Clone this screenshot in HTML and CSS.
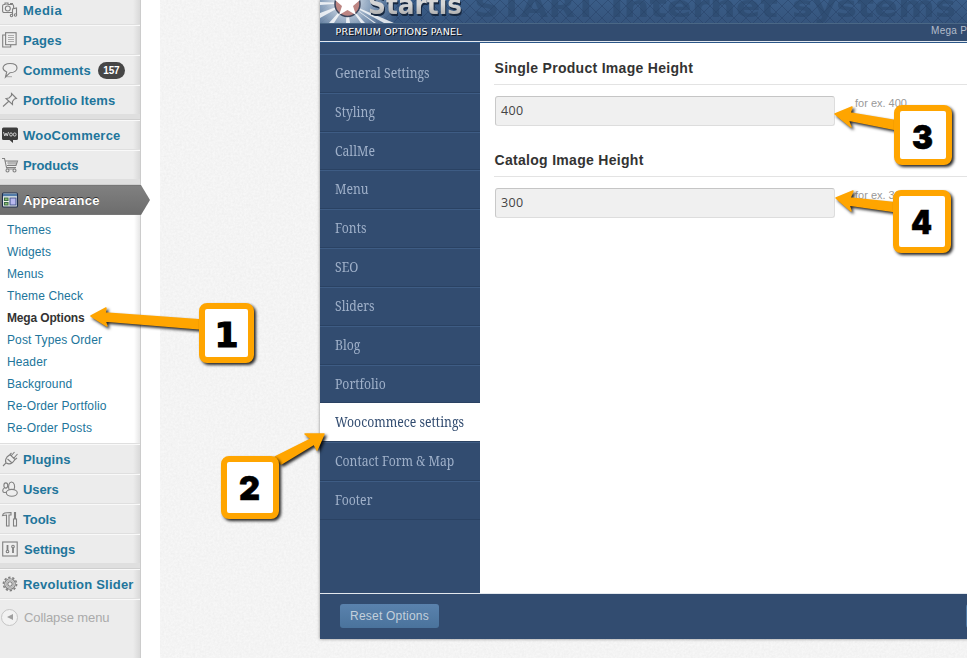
FILE: index.html
```html
<!DOCTYPE html>
<html lang="en">
<head>
<meta charset="utf-8">
<title>Mega Options</title>
<link rel="stylesheet" href="styles.css">
</head>
<body>
<div class="screen">
  <nav class="sidebar">
    <a class="item"><svg class="ico" viewBox="0 0 16 16"><rect x=".6" y="2.5" width="11" height="8" rx="1.5"/><path d="M3 2.5V1h3v1.500M8 1.500h3"/><circle cx="5.800" cy="6.500" r="2.500"/><path d="M10.500 13.500V7l4-1v7"/><circle cx="9.500" cy="13.500" r="1.200"/><circle cx="13.500" cy="13" r="1.200"/></svg><span class="wider">Media</span></a>
    <a class="item"><svg class="ico" viewBox="0 0 16 16"><path d="M3.500 3H.700v12h8v-2"/><rect x="3.600" y=".7" width="10.500" height="12"/><path class="thin" d="M6 3.500h6M6 5.500h6M6 7.500h6M6 9.500h6"/></svg><span>Pages</span></a>
    <a class="item"><svg class="ico" viewBox="0 0 16 16"><path d="M8 1.500c4 0 7 1.700 7 4.500s-3 4.700-7 4.700L3.500 15l1.200-5C2.500 9 1 8 1 6c0-2.800 3-4.500 7-4.500z"/><path class="thin" d="M3 14.700h7"/></svg><span>Comments</span><b class="badge">157</b></a>
    <a class="item"><svg class="ico" viewBox="0 0 16 16"><path d="M9.500 1.500l5 5-2 .5-2 2.500v3L4 6.500l3-.5 2.500-2.500zM6.500 9.500L1 14.500"/></svg><span>Portfolio Items</span></a>
    <div class="sep"></div>
    <a class="item"><svg class="ico" viewBox="0 0 16 16"><path class="dark" d="M1.500.5h13q1.500 0 1.500 1.500v9.500q0 1.500-1.500 1.500H11v3l-3.500-3h-6Q0 13 0 11.500V2Q0 .5 1.500.5z"/><path class="white" d="M1.500 5l1.300 4 1.200-3 1.200 3 1.300-4"/><ellipse class="white" cx="9" cy="7.500" rx="1.400" ry="1.600"/><ellipse class="white" cx="12.700" cy="7.500" rx="1.400" ry="1.600"/></svg><span class="wide">WooCommerce</span></a>
    <a class="item"><svg class="ico" viewBox="0 0 16 16"><path d="M0 1.500h2.500l2 9H14M3.500 4h12l-1.500 4.500H5M4 12h9.500"/><path class="thin" d="M5 6h10M7 4v4M9 4v4M11 4v4M13 4v4"/><circle cx="5.500" cy="13.500" r="1.500"/><circle cx="12.500" cy="13.500" r="1.500"/></svg><span class="tight">Products</span></a>
    <div class="sep"></div>
    <a class="item current"><svg class="ico" viewBox="0 0 16 16"><rect class="win" x=".5" y="1" width="15" height="14" rx="1"/><path class="winbar" d="M1 3h14"/><path class="green" d="M2.500 6h3.500v2.500H2.500zM2.500 10.500h3.500V13H2.500z"/><path class="lilac" d="M8 6h6v7H8z"/></svg><span class="wide">Appearance</span></a>
    <div class="submenu">
      <a>Themes</a><a>Widgets</a><a>Menus</a><a>Theme Check</a><a class="on">Mega Options</a><a>Post Types Order</a><a>Header</a><a>Background</a><a>Re-Order Portfolio</a><a>Re-Order Posts</a>
    </div>
    <a class="item"><svg class="ico" viewBox="0 0 16 16"><path d="M1 15l3-3c-1-2-.5-4 1-6l3-2.500 5 5-2.500 3c-2 1.500-4 2-6 .5M8 3.500L9.500 2M13 8.500l2-1.500M9 5l3.500-4M11.500 7.500L15.500 3M5.500 8l4 3.500"/></svg><span>Plugins</span></a>
    <a class="item"><svg class="ico" viewBox="0 0 16 16"><ellipse cx="3.800" cy="4.500" rx="1.900" ry="2.600"/><path d="M2.500 7C0 8 .5 11 2 11.500l3.500-.3"/><path d="M7 8.500C6 5 7 1 9.500 1s4 4 2.500 7.500"/><ellipse cx="9.800" cy="11.800" rx="5.500" ry="3.400"/></svg><span class="tight">Users</span></a>
    <a class="item"><svg class="ico" viewBox="0 0 16 16"><path d="M.5 4.500C1 2 3 1.500 9 1.500V4H7v11H4.500V4zM12.500 1v7M13.500 1v7"/><rect x="11.500" y="8" width="3" height="7"/></svg><span class="tight">Tools</span></a>
    <a class="item"><svg class="ico" viewBox="0 0 16 16"><rect x=".7" y="1" width="14.500" height="14"/><path class="bold" d="M5.500 4v5M11 7v5"/><circle cx="5.500" cy="10.500" r="1.300"/><circle cx="11" cy="5.500" r="1.300"/></svg><span class="nudge">Settings</span></a>
    <div class="sep"></div>
    <a class="item"><svg class="ico" viewBox="0 0 16 16"><circle cx="8" cy="8" r="5.300"/><circle class="teeth" cx="8" cy="8" r="6.600"/><circle cx="8" cy="8" r="2.200"/><circle class="thin" cx="8" cy="8" r="3.800"/></svg><span class="wide">Revolution Slider</span></a>
    <div class="collapse"><i></i><span>Collapse menu</span></div>
  </nav>
  <main class="stage">
    <svg class="grain" width="807" height="658"><filter id="paper" x="0" y="0" width="100%" height="100%"><feTurbulence type="fractalNoise" baseFrequency=".45" numOctaves="2" seed="4"/><feColorMatrix values="0 0 0 0 .5  0 0 0 0 .5  0 0 0 0 .5  .35 0 0 0 -.08"/></filter><rect width="807" height="658" filter="url(#paper)"/></svg>
    <section class="panel">
      <header class="brand">
        <svg width="720" height="23">
          <defs>
            <linearGradient id="sky" x2="0" y2="1"><stop stop-color="#3a5d88"/><stop offset="1" stop-color="#35547c"/></linearGradient>
            <pattern id="net" width="12" height="12" patternUnits="userSpaceOnUse"><path d="M0 0l12 12M12 0L0 12" stroke="#243e63" stroke-width=".8" opacity=".6"/></pattern>
            <radialGradient id="glow" gradientUnits="userSpaceOnUse" cx="26" cy="0" r="54"><stop stop-color="#fff"/><stop offset=".45" stop-color="#aabdd2" stop-opacity=".75"/><stop offset="1" stop-color="#7f9aba" stop-opacity="0"/></radialGradient>
            <linearGradient id="silver" x2="0" y2="1"><stop offset=".5" stop-color="#d6d6d6"/><stop offset="1" stop-color="#9c9c9c"/></linearGradient>
          </defs>
          <rect width="720" height="23" fill="url(#sky)"/><rect width="720" height="23" fill="url(#net)"/>
          <g font-family="DejaVu Sans" font-weight="bold" font-size="30" fill="#294568" opacity=".5"><text x="154" y="17" textLength="124" lengthAdjust="spacingAndGlyphs">START</text><text x="290" y="17" textLength="168" lengthAdjust="spacingAndGlyphs">Internet</text><text x="472" y="17" textLength="164" lengthAdjust="spacingAndGlyphs">systems</text></g>
          <rect width="90" height="23" fill="url(#glow)"/>
          <path d="M27 3L74 23H64zM27 3l18 20h-4zM27 3L30 23h-4zM27 3L14 23H9zM27 3L0 18v-5zM27 3L0 5V2zM27 3L56 23h-2z" fill="#fff" opacity=".8"/>
          <circle cx="27.500" cy="4" r="12.500" fill="#bd8582" stroke="#3c465c" stroke-width="1.500"/>
          <path d="M27-10l4 10h9l-7 6 3 9-8.500-5L19 15l3-9-7-6h9z" fill="#fff"/>
          <text class="logo" x="48" y="13.500" textLength="94" lengthAdjust="spacingAndGlyphs">Startis</text>
        </svg>
      </header>
      <div class="strip"><span>PREMIUM OPTIONS PANEL</span><small>Mega Panel</small></div>
      <div class="body">
        <ul class="tabs"><li><span>General Settings</span></li><li><span>Styling</span></li><li><span>CallMe</span></li><li><span>Menu</span></li><li><span>Fonts</span></li><li><span>SEO</span></li><li><span>Sliders</span></li><li><span>Blog</span></li><li><span>Portfolio</span></li><li class="active"><span>Woocommece settings</span></li><li><span>Contact Form &amp; Map</span></li><li><span>Footer</span></li></ul>
        <div class="form">
          <h3>Single Product Image Height</h3>
          <div class="field"><div class="input">400</div><small>for ex. 400</small></div>
          <h3>Catalog Image Height</h3>
          <div class="field"><div class="input">300</div><small>for ex. 300</small></div>
        </div>
      </div>
      <footer class="foot"><span class="reset">Reset Options</span><span class="save"></span></footer>
    </section>
  </main>
</div>
<svg class="notes" width="967" height="658">
  <g class="arrows">
    <path d="M91 316L106 308 105 313 202 320V329L105 321 107 326z"/>
    <path d="M324 434L317 450 314 444 281 464 275 457 311 439 305 434z"/>
    <path d="M835 114L852 107 850 113 898 121V130L848 120 851 127z"/>
    <path d="M836 198L853 191 850 198 898 203V212L849 205 851 211z"/>
  </g>
  <g class="boxes">
    <rect x="202" y="306" width="49" height="54" rx="5"/>
    <rect x="224" y="459" width="52" height="57" rx="5"/>
    <rect x="897" y="108" width="52" height="54" rx="5"/>
    <rect x="896" y="193" width="52" height="57" rx="5"/>
  </g>
  <g class="nums"><text class="one" x="214.500" y="347" textLength="24" lengthAdjust="spacingAndGlyphs">1</text><text x="239" y="500" textLength="21" lengthAdjust="spacingAndGlyphs">2</text><text x="912" y="149" textLength="21" lengthAdjust="spacingAndGlyphs">3</text><text x="911" y="234" textLength="21" lengthAdjust="spacingAndGlyphs">4</text></g>
</svg>
</body>
</html>
```
FILE: styles.css
```css
* { box-sizing: border-box; }
body { margin: 0; width: 967px; height: 658px; overflow: hidden; background: #fff; font-family: "Liberation Sans", sans-serif; }
.screen { display: flex; height: 658px; overflow: hidden; }

.sidebar { flex: none; width: 141px; height: 658px; margin-right: 19px; background: linear-gradient(90deg, #ececec 133px, #d9d9d9 140px); border-right: 1px solid #ccc; }
.item { display: flex; align-items: center; height: 30px; padding-left: 2px; border-top: 1px solid #f9f9f9; border-bottom: 1px solid #dfdfdf; color: #21759b; font-weight: bold; font-size: 13px; letter-spacing: .08px; white-space: nowrap; }
.item:first-child { margin-top: -5px; }
.item span { margin-left: 5px; }
.item .nudge { margin-left: 6px; letter-spacing: 0; }
.item .wide { letter-spacing: .22px; }
.item .wider { letter-spacing: .45px; }
.item .tight { letter-spacing: -.12px; }
.sep { height: 5px; background: #dfdfdf; border-bottom: 1px solid #cfcfcf; }
.ico { flex: none; width: 16px; height: 16px; fill: #eee; stroke: #808080; stroke-width: 1.1; overflow: visible; }
.ico .thin { stroke-width: .6; fill: none; }
.ico .bold { stroke-width: 1.800; }
.ico .dark { fill: #3c3c3c; stroke: none; }
.ico .white { fill: none; stroke: #ddd; stroke-width: .9; }
.ico .win { fill: #eef3ec; stroke: #1f2f4f; }
.ico .winbar { stroke: #527caa; stroke-width: 2.500; }
.ico .green { fill: #8cc06a; stroke: #3f6d4c; }
.ico .lilac { fill: #b9b9ee; stroke: #4b5b94; }
.ico .teeth { fill: none; stroke-width: 1.600; stroke-dasharray: 2.300 1.850; }
.badge { margin-left: 7px; width: 27px; height: 17px; border-radius: 9px; background: #464646; color: #fff; font-size: 10px; line-height: 17px; text-align: center; letter-spacing: -.2px; }
.current { position: relative; width: 141px; background: linear-gradient(#808080, #6d6d6d); border-color: #777; color: #fff; text-shadow: 0 -1px 0 #333; }
.current::after { content: ""; position: absolute; left: 141px; top: -1px; width: 9px; height: 30px; background: linear-gradient(#808080, #6d6d6d); clip-path: polygon(0 0, 100% 50%, 0 100%); }
.submenu { height: 229px; padding-top: 4px; background: linear-gradient(90deg, #fff 134px, #e6e6e6 140px); border-bottom: 1px solid #dfdfdf; }
.submenu a { display: block; height: 22px; padding-left: 7px; font-size: 12px; line-height: 22px; color: #21759b; white-space: nowrap; letter-spacing: .12px; }
.submenu .on { color: #333; font-weight: bold; letter-spacing: -.15px; }
.collapse { display: flex; align-items: center; height: 35px; border-top: 1px solid #f9f9f9; color: #aaa; font-size: 13px; letter-spacing: -.1px; }
.collapse i { display: grid; place-items: center; margin: 0 6px 0 1px; width: 17px; height: 17px; border: 1px solid #c6c6c6; border-radius: 50%; background: #f2f2f2; }
.collapse i::before { content: ""; border: 3.500px solid transparent; border-left: 0; border-right: 6px solid #a0a0a0; }

.stage { position: relative; flex: none; width: 807px; background: #f7f7f7; overflow: hidden; }
.grain { position: absolute; left: 0; top: 0; opacity: .6; }
.panel { position: relative; width: 720px; height: 639px; margin-left: 160px; background: #fff; box-shadow: 0 0 3px rgba(0, 0, 0, .45); }
.brand { height: 23px; }
.brand svg { display: block; }
.logo { font: bold 26px "DejaVu Sans", sans-serif; fill: url(#silver); filter: drop-shadow(1px 2px 0 #172840); }
.strip { display: flex; height: 20px; background: #324c70; border-top: 1px solid #4a6785; border-bottom: 1px solid #2b5688; box-shadow: inset 0 -1px 0 #e3e8ee; color: #fff; }
.strip span { width: 595px; padding-left: 15.500px; font: 9.500px/15px "DejaVu Sans", sans-serif; text-shadow: 1px 1px 0 #111; white-space: nowrap; letter-spacing: .15px; }
.strip small { padding-left: 16px; font-size: 10px; line-height: 14px; letter-spacing: .3px; color: #b2bccb; }
.body { display: flex; height: 550px; }
.tabs { flex: none; width: 160px; margin: 0; padding: 11px 0 0; list-style: none; background: #324c70; }
.tabs li { height: 38.820px; padding-left: 14.500px; border-top: 1px solid #3e5c84; border-bottom: 1px solid #2a4263; color: #9fb0c9; font: 14px/35px "Noto Serif", "Liberation Serif", serif; white-space: nowrap; }
.tabs span { display: inline-block; transform: scaleX(.872); transform-origin: left; }
.tabs .active { background: #fff; color: #324c70; border-top-color: #fff; }
.form { flex: 1; padding-left: 14px; }
.form h3 { margin: 0; height: 42px; padding: 16px 0 0 .5px; border-bottom: 1px solid #e3e3e3; font-size: 14px; line-height: 19px; color: #333; letter-spacing: .3px; }
.field { display: flex; height: 50px; padding: 11px 0 0 1px; }
.input { width: 340px; height: 30px; padding-left: 5px; border: 1px solid #ddd; border-top-color: #c5c5c5; border-left-color: #c9c9c9; border-radius: 3px; background: #f0f0f0; color: #444; font: 12.500px/28px "Open Sans", sans-serif; letter-spacing: .3px; }
.field small { margin-left: 20px; padding-top: 1px; font-size: 11px; line-height: 13px; color: #999; }
.foot { display: flex; justify-content: space-between; align-items: flex-start; height: 46px; padding: 10px 0 0 20px; background: #324c70; border-top: 1px solid #e3e8ee; }
.reset { width: 99px; height: 24px; border-radius: 3px; background: linear-gradient(#5a82ad, #4a739c); color: #c3d0dc; font-size: 12px; line-height: 25px; text-align: center; letter-spacing: .22px; }
.save { width: 74px; height: 24px; border-radius: 3px; background: #527ba6; }

.notes { position: absolute; left: 0; top: 0; pointer-events: none; }
.arrows, .boxes { filter: drop-shadow(2px 2px 1.500px rgba(0, 0, 0, .85)); }
.arrows { fill: orange; stroke: orange; stroke-width: 1.500; stroke-linejoin: round; }
.boxes { fill: #fff; stroke: orange; stroke-width: 6; }
.nums { font: 900 33px Inter, sans-serif; fill: #000; stroke: #000; stroke-width: .6; }
.nums .one { font-family: "DejaVu Sans", sans-serif; stroke-width: 1.200; }
```
